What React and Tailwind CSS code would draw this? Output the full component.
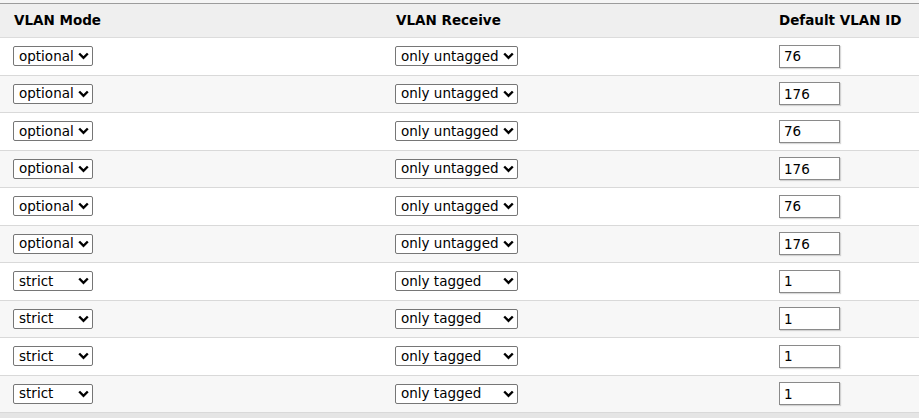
import { useState } from 'react';

const rows = [
  { mode: 'optional', receive: 'only untagged', pvid: '76' },
  { mode: 'optional', receive: 'only untagged', pvid: '176' },
  { mode: 'optional', receive: 'only untagged', pvid: '76' },
  { mode: 'optional', receive: 'only untagged', pvid: '176' },
  { mode: 'optional', receive: 'only untagged', pvid: '76' },
  { mode: 'optional', receive: 'only untagged', pvid: '176' },
  { mode: 'strict', receive: 'only tagged', pvid: '1' },
  { mode: 'strict', receive: 'only tagged', pvid: '1' },
  { mode: 'strict', receive: 'only tagged', pvid: '1' },
  { mode: 'strict', receive: 'only tagged', pvid: '1' },
];

function Chevron() {
  return (
    <svg
      className="pointer-events-none absolute right-[4px] top-1/2 -translate-y-1/2"
      width="11"
      height="8"
      viewBox="0 0 11 8"
    >
      <path d="M1.2 1.5 L5.5 5.8 L9.8 1.5" fill="none" stroke="#000" strokeWidth="2.4" />
    </svg>
  );
}

function Select({ value, options, width }) {
  const [v, setV] = useState(value);
  return (
    <div className={`relative ${width} h-[20px]`}>
      <select
        value={v}
        onChange={(e) => setV(e.target.value)}
        className="appearance-none block w-full h-full bg-white border border-[#767676] rounded-[2px] pl-[5px] pr-4 py-0 text-[13.5px] leading-[17px] text-black outline-none"
      >
        {options.map((o) => (
          <option key={o}>{o}</option>
        ))}
      </select>
      <Chevron />
    </div>
  );
}

export default function App() {
  const [data, setData] = useState(rows);

  return (
    <div
      className="w-[919px] h-[418px] bg-[#f5f5f5] pt-[3px] overflow-hidden text-black"
      style={{ fontFamily: '"DejaVu Sans", Verdana, sans-serif' }}
    >
      <div className="border-t border-[#9c9c9c] bg-white">
        <div className="grid grid-cols-[383px_383px_1fr] h-[34px] bg-[#efefef] border-b border-[#dcdcdc] items-center text-[13.5px] font-bold">
          <div className="pl-[14px]">VLAN Mode</div>
          <div className="pl-[13px]">VLAN Receive</div>
          <div className="pl-[13px]">Default VLAN ID</div>
        </div>
        {data.map((r, i) => (
          <div
            key={i}
            className={`grid grid-cols-[383px_383px_1fr] h-[37.5px] items-center border-b border-[#d9d9d9] ${
              i % 2 === 0 ? 'bg-white' : 'bg-[#f7f7f7]'
            }`}
          >
            <div className="pl-[13px]">
              <Select value={r.mode} options={['optional', 'strict']} width="w-[80px]" />
            </div>
            <div className="pl-[12px]">
              <Select
                value={r.receive}
                options={['only untagged', 'only tagged', 'both']}
                width="w-[123px]"
              />
            </div>
            <div className="pl-[13px]">
              <input
                value={r.pvid}
                onChange={(e) => {
                  const next = [...data];
                  next[i] = { ...r, pvid: e.target.value };
                  setData(next);
                }}
                className="block w-[61px] h-[23px] bg-white border border-[#8a8a8a] shadow-[1px_1px_1px_rgba(0,0,0,0.15)] pl-[4px] text-[13.5px] text-black outline-none"
              />
            </div>
          </div>
        ))}
      </div>
      <div className="h-[6px] bg-[#e5e5e5]" />
    </div>
  );
}
